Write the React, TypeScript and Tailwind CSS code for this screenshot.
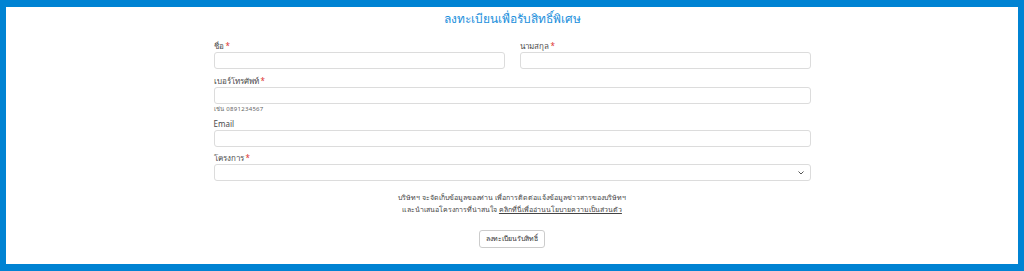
export default function App() {
  return (
    <div className="h-[271px] w-[1024px] bg-[#0083d3] pt-[7px] pb-[7px] px-[6px] font-['Noto_Sans',sans-serif]">
      <div className="h-full bg-white flex flex-col items-center">
        <h1 className="mt-[3px] text-[12px] leading-[18px] text-[#1b8fdc]">ลงทะเบียนเพื่อรับสิทธิ์พิเศษ</h1>

        <form className="mt-[12px] w-[597px] flex flex-col text-[#4a4a4a]">
          <div className="grid grid-cols-2 gap-x-[15px]">
            <Field label="ชื่อ" required />
            <Field label="นามสกุล" required />
          </div>
          <div className="mt-[6px]">
            <Field label="เบอร์โทรศัพท์" required />
            <p className="mt-[1px] text-[6px] leading-[8px] text-[#666] tracking-[0.3px]">เช่น 0891234567</p>
          </div>
          <div className="mt-[5px]">
            <Field label="Email" />
          </div>
          <div className="mt-[5px]">
            <label className="block text-[8px] leading-[11px] h-[11px]">
              โครงการ <span className="text-[#d33]">*</span>
            </label>
            <div className="mt-[1px] h-[17px] rounded-[3px] border border-[#dcdcdc] flex items-center justify-end pr-[6px]">
              <svg width="6" height="4" viewBox="0 0 6 4" fill="none">
                <path d="M0.5 0.5 L3 3 L5.5 0.5" stroke="#555" strokeWidth="1" />
              </svg>
            </div>
          </div>
        </form>

        <div className="mt-[11px] text-center text-[7px] leading-[12px] text-[#444]">
          <p>บริษัทฯ จะจัดเก็บข้อมูลของท่าน เพื่อการติดต่อแจ้งข้อมูลข่าวสารของบริษัทฯ</p>
          <p>
            และนำเสนอโครงการที่น่าสนใจ <span className="underline">คลิกที่นี่เพื่ออ่านนโยบายความเป็นส่วนตัว</span>
          </p>
        </div>

        <button className="mt-[14px] h-[18px] px-[6px] rounded-[3px] border border-[#ccc] bg-white text-[7px] text-[#333]">
          ลงทะเบียนรับสิทธิ์
        </button>
      </div>
    </div>
  );
}

function Field({ label, required }: { label: string; required?: boolean }) {
  return (
    <div>
      <label className="block text-[8px] leading-[11px] h-[11px]">
        {label} {required && <span className="text-[#d33]">*</span>}
      </label>
      <input className="mt-[1px] block w-full h-[17px] rounded-[3px] border border-[#dcdcdc] outline-none" />
    </div>
  );
}
